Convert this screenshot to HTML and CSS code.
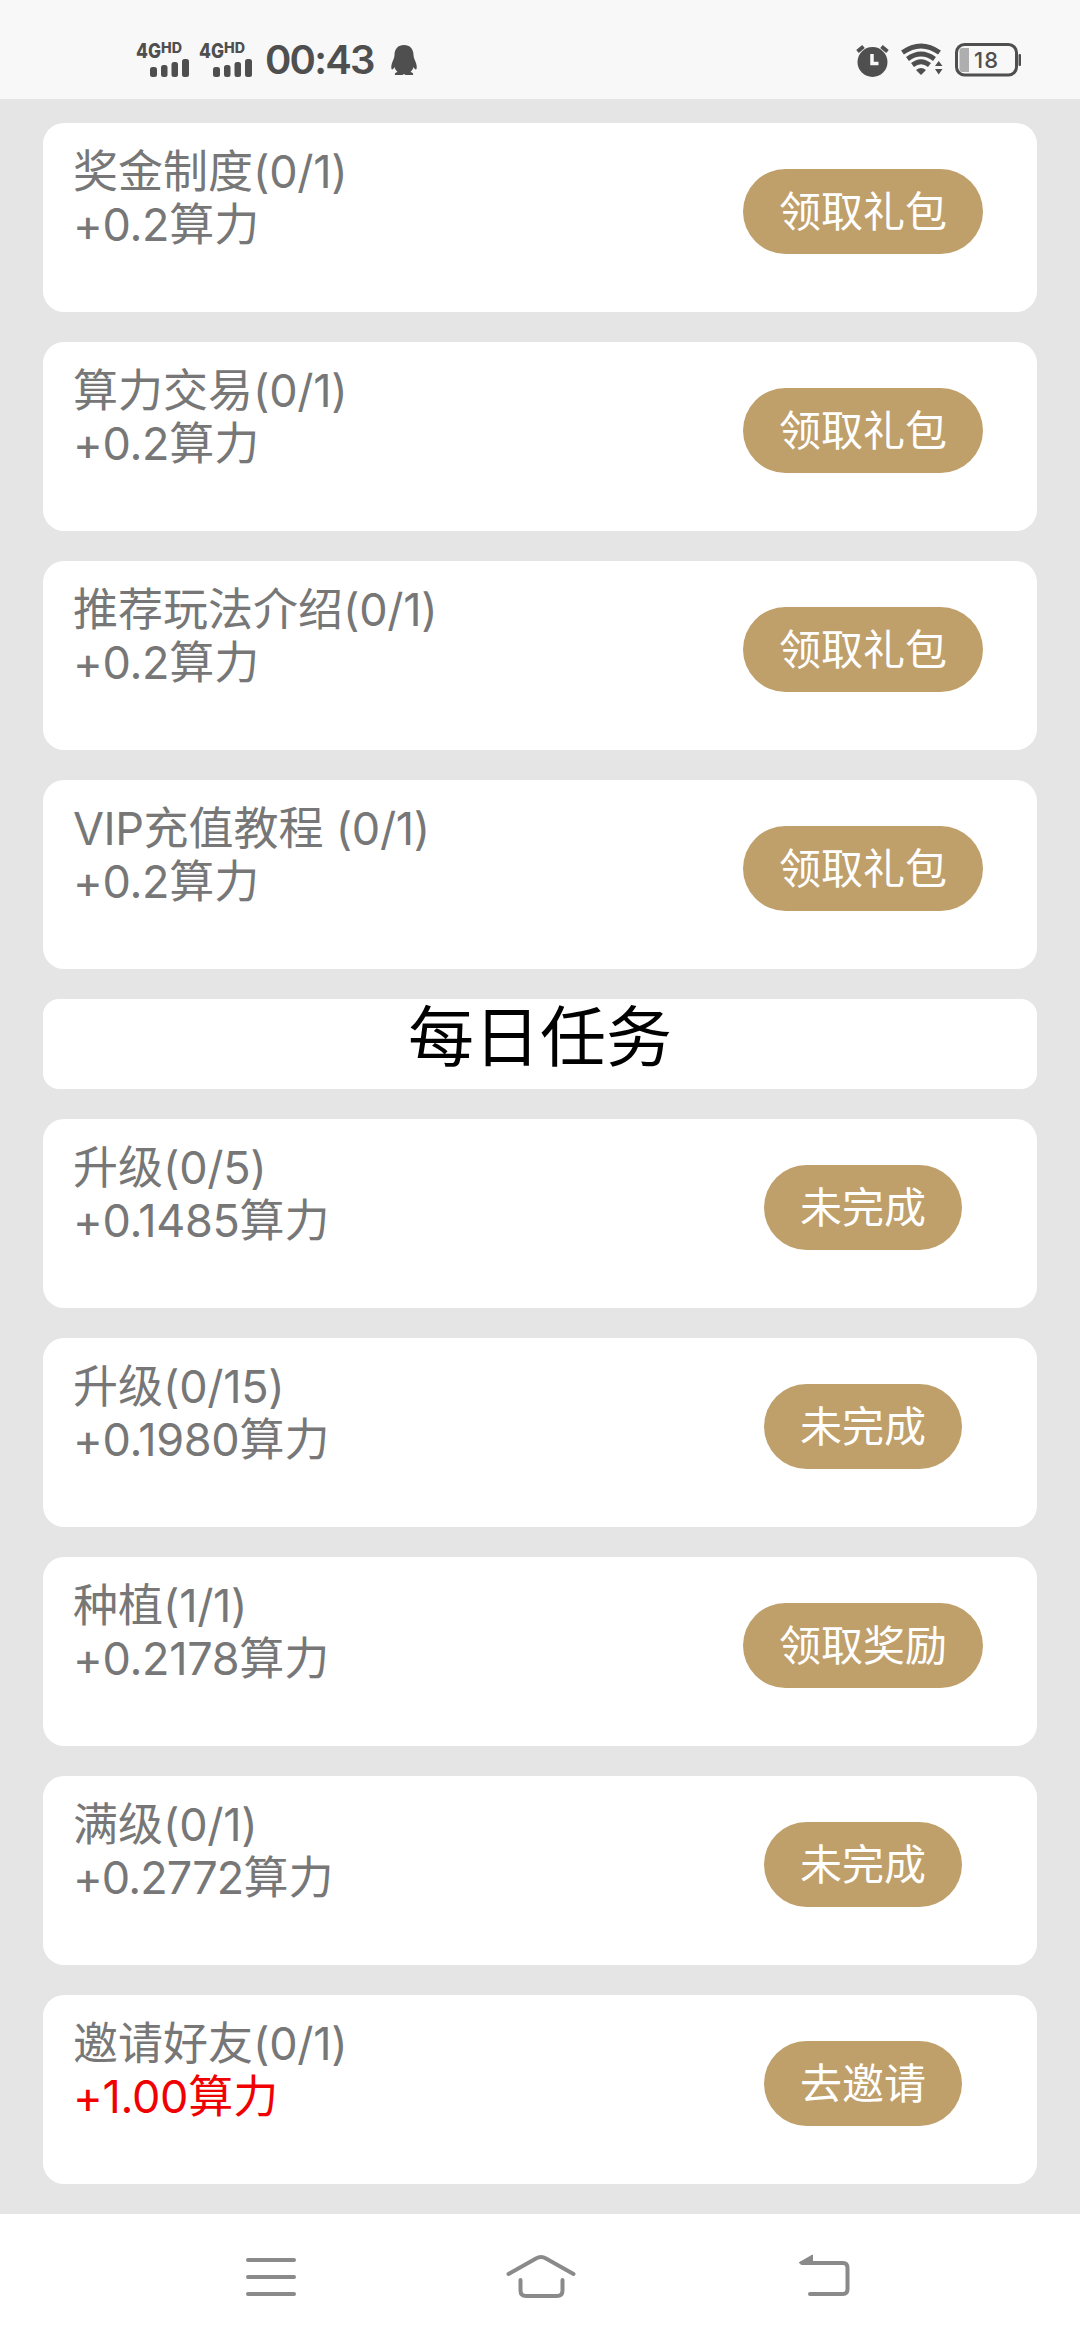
FILE: index.html
```html
<!DOCTYPE html>
<html lang="zh-CN">
<head>
<meta charset="utf-8">
<title>每日任务</title>
<link rel="stylesheet" href="styles.css">
</head>
<body>
<header class="status">
  <div class="status-left">
    <svg class="signal" viewBox="0 0 54 36">
      <text class="net" x="0" y="15.500" textLength="25" lengthAdjust="spacingAndGlyphs">4G</text>
      <text class="hd" x="25" y="10.500" textLength="21" lengthAdjust="spacingAndGlyphs">HD</text>
      <rect x="14" y="25" width="7" height="10" rx="2.500"/><rect x="25" y="23" width="6.500" height="12" rx="2.500"/><rect x="35.500" y="20" width="6.500" height="15" rx="2.500"/><rect x="46" y="17" width="7" height="18" rx="2.500"/>
    </svg>
    <svg class="signal" viewBox="0 0 54 36">
      <text class="net" x="0" y="15.500" textLength="25" lengthAdjust="spacingAndGlyphs">4G</text>
      <text class="hd" x="25" y="10.500" textLength="21" lengthAdjust="spacingAndGlyphs">HD</text>
      <rect x="14" y="25" width="7" height="10" rx="2.500"/><rect x="25" y="23" width="6.500" height="12" rx="2.500"/><rect x="35.500" y="20" width="6.500" height="15" rx="2.500"/><rect x="46" y="17" width="7" height="18" rx="2.500"/>
    </svg>
    <span class="time">00:43</span>
    <svg class="penguin" viewBox="0 0 26 31"><path d="M13 0C7 0 3.500 4 3.500 10C3.500 13 2 15 1 18C0 21 0 24 1 24.500C2 24.500 3 23 3.500 22C4 24 5 25.500 6.500 27C4 27.500 3.500 28.500 4 30H11.500L13 29L14.500 30H22C22.500 28.500 22 27.500 19.500 27C21 25.500 22 24 22.500 22C23 23 24 24.500 25 24.500C26 24 26 21 25 18C24 15 22.500 13 22.500 10C22.500 4 19 0 13 0Z"/></svg>
  </div>
  <div class="status-right">
    <svg class="alarm" viewBox="0 0 33 32"><circle cx="16.500" cy="17" r="15"/><path class="bells" d="M1.500 6.500L7.500 1.500M31.500 6.500L25.500 1.500"/><path class="hands" d="M16 9V18.500H22.500"/></svg>
    <svg class="wifi" viewBox="0 0 42 32"><path class="arc" d="M1.500 8.500Q20 -4.500 38.500 8.500M6.500 15Q20 5 33.500 15M11.500 21Q20 14.500 28.500 21"/><path d="M15 26Q20 22 25 26L20 31ZM34 22L37.700 17L41.500 22ZM34 25H41.500L37.700 30.500Z"/></svg>
    <svg class="battery" viewBox="0 0 66 34"><rect class="case" x="1.500" y="1.500" width="60" height="30.500" rx="8"/><path class="level" d="M7 5H14V29H7Q4.500 29 4.500 26V8Q4.500 5 7 5Z"/><rect x="63.500" y="11" width="2.500" height="12" rx="1"/><text class="percent" x="19" y="24.500" textLength="24">18</text></svg>
  </div>
</header>
<main class="tasks">
  <section class="card"><div class="info"><p>奖金制度<span class="num">(0/1)</span></p><p><span class="num">+0.2</span>算力</p></div><div class="action"><button>领取礼包</button></div></section>
  <section class="card"><div class="info"><p>算力交易<span class="num">(0/1)</span></p><p><span class="num">+0.2</span>算力</p></div><div class="action"><button>领取礼包</button></div></section>
  <section class="card"><div class="info"><p>推荐玩法介绍<span class="num">(0/1)</span></p><p><span class="num">+0.2</span>算力</p></div><div class="action"><button>领取礼包</button></div></section>
  <section class="card"><div class="info"><p><span class="vip">VIP</span>充值教程<span class="num"> (0/1)</span></p><p><span class="num">+0.2</span>算力</p></div><div class="action"><button>领取礼包</button></div></section>
  <h1 class="heading">每日任务</h1>
  <section class="card"><div class="info"><p>升级<span class="num">(0/5)</span></p><p><span class="num">+0.1485</span>算力</p></div><div class="action"><button>未完成</button></div></section>
  <section class="card"><div class="info"><p>升级<span class="num">(0/15)</span></p><p><span class="num">+0.1980</span>算力</p></div><div class="action"><button>未完成</button></div></section>
  <section class="card"><div class="info"><p>种植<span class="num">(1/1)</span></p><p><span class="num">+0.2178</span>算力</p></div><div class="action"><button>领取奖励</button></div></section>
  <section class="card"><div class="info"><p>满级<span class="num">(0/1)</span></p><p><span class="num tight">+0.2772</span>算力</p></div><div class="action"><button>未完成</button></div></section>
  <section class="card"><div class="info"><p>邀请好友<span class="num">(0/1)</span></p><p class="hot"><span class="num">+1.00</span>算力</p></div><div class="action"><button>去邀请</button></div></section>
</main>
<nav class="nav">
  <svg viewBox="0 0 70 50"><path d="M12 10H58M12 27H58M12 44H58"/></svg>
  <svg class="home" viewBox="0 0 70 50"><path d="M2.500 24L30 8.500Q35 5.500 40 8.500L67.500 24M14.500 30V40.500Q14.500 46 20 46H51Q56.500 46 56.500 40.500V30"/></svg>
  <svg viewBox="0 0 70 50"><path d="M12 13H53Q57.500 13 57.500 18V39Q57.500 44 53 44H20"/><path class="tip" d="M9.500 12.500L22.500 5V13H10Z"/></svg>
</nav>
</body>
</html>
```
FILE: styles.css
```css
* { box-sizing: border-box; }
body {
  margin: 0;
  width: 1080px;
  height: 2340px;
  display: flex;
  flex-direction: column;
  background: #e5e5e5;
  font-family: "Noto Sans CJK SC", sans-serif;
}
.status {
  height: 99px;
  background: #f8f8f8;
  display: flex;
  justify-content: space-between;
  padding: 42px 59px 0 136px;
  fill: #4f4f4f;
}
.status-left, .status-right { display: flex; align-items: flex-start; }
.status svg { overflow: visible; }
.signal { width: 54px; height: 36px; margin-right: 9px; }
.net { font: 800 20px Inter, sans-serif; }
.hd { font: 800 14px Inter, sans-serif; }
.time {
  width: 110px;
  margin: 3px 0 0 3px;
  font: 600 40px/29px Inter, sans-serif;
  letter-spacing: -1.8px;
  color: #4f4f4f;
}
.penguin { width: 26px; height: 31px; margin: 3px 0 0 16px; }
.alarm { width: 33px; height: 32px; margin: 3px 12px 0 0; }
.bells { stroke: #4f4f4f; stroke-width: 4; }
.hands { fill: none; stroke: #f8f8f8; stroke-width: 3.5; }
.wifi { width: 42px; height: 32px; margin: 2px 12px 0 0; }
.arc { fill: none; stroke: #4f4f4f; stroke-width: 4.8; }
.battery { width: 66px; height: 34px; margin-top: 1px; }
.case { fill: none; stroke: #4f4f4f; stroke-width: 3; }
.level { fill: #aeaeae; }
.percent { font: 500 22px Inter, sans-serif; }

.tasks {
  flex: 1;
  display: flex;
  flex-direction: column;
  gap: 30px;
  padding: 24px 43px 30px;
}
.card {
  height: 189px;
  display: flex;
  justify-content: space-between;
  border-radius: 21px;
  background: #fff;
}
.info { padding: 19px 0 0 30px; color: #777; }
.info p { margin: 0; height: 53px; font-size: 45px; line-height: 53px; white-space: pre; }
.info .hot { color: #f00000; }
.num, .vip { font-family: Inter, sans-serif; }
.num { letter-spacing: -0.3px; }
.num.tight { letter-spacing: -0.9px; }
.vip { letter-spacing: -0.5px; }
.action { width: 348px; padding-top: 46px; text-align: center; }
button {
  height: 85px;
  padding: 0 36px 6px;
  border: 0;
  border-radius: 43px;
  background: #bfa06b;
  color: #fff;
  font: 42px/60px "Noto Sans CJK SC", sans-serif;
}
.heading {
  height: 90px;
  margin: 0;
  border-radius: 16px;
  background: #fff;
  color: #000;
  font-size: 66px;
  font-weight: 400;
  line-height: 67px;
  text-align: center;
}
.nav {
  height: 126px;
  display: flex;
  justify-content: space-between;
  padding: 36px 220px 0 236px;
  background: #fff;
}
.nav svg { width: 70px; height: 50px; fill: none; stroke: #8a8a8a; stroke-width: 4; stroke-linecap: round; stroke-linejoin: round; }
.nav .home { margin-right: 14px; }
.nav .tip { fill: #8a8a8a; stroke-width: 1; }
```
